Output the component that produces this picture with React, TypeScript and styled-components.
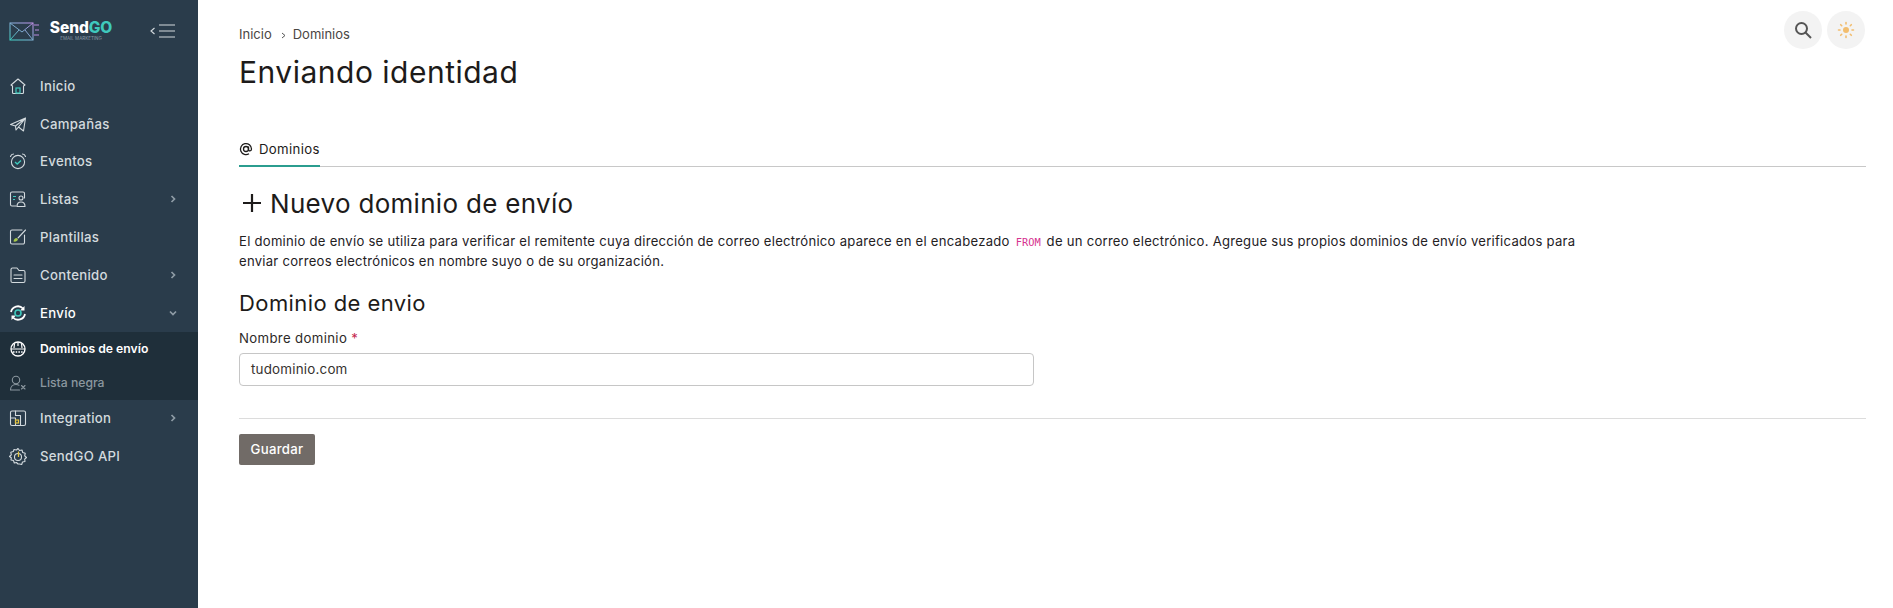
import React from 'react';
import styled, { createGlobalStyle } from 'styled-components';

const FONT = `Inter, "Open Sans", "Liberation Sans", sans-serif`;

const Global = createGlobalStyle`
  html, body { margin: 0; padding: 0; background: #fff; }
  body { font-family: ${FONT}; color: #1d1b1a; }
  * { box-sizing: border-box; }
`;

const Page = styled.div`
  display: flex;
  width: 1893px;
  height: 608px;
  overflow: hidden;
`;

const Sidebar = styled.aside`
  width: 198px;
  flex-shrink: 0;
  background: #2a3c4b;
  display: flex;
  flex-direction: column;
`;

const Brand = styled.div`
  height: 67px;
  display: flex;
  align-items: center;
  padding: 0 0 6px 9px;
`;

const BrandText = styled.div`
  display: flex;
  flex-direction: column;
  align-items: center;
  margin-left: 9px;
  width: 64px;
`;

const BrandName = styled.div`
  font-size: 15.5px;
  line-height: 16px;
  font-weight: 800;
  color: #fff;
  letter-spacing: -0.1px;
  span { color: #3fc9bd; }
`;

const BrandSub = styled.div`
  font-size: 4.5px;
  line-height: 6px;
  color: #8b9aa6;
  white-space: nowrap;
`;

const Collapse = styled.div`
  margin-left: auto;
  margin-right: 22px;
  display: flex;
`;

const Nav = styled.nav`
  display: flex;
  flex-direction: column;
`;

const NavItem = styled.div<{ $active?: boolean }>`
  height: 37.8px;
  display: flex;
  align-items: center;
  padding: 0 20px 0 9px;
  font-size: 13.2px;
  letter-spacing: 0.3px;
  font-weight: 500;
  color: ${({ $active }) => ($active ? '#ffffff' : '#d3dade')};
`;

const NavIcon = styled.span`
  width: 18px;
  height: 18px;
  margin-right: 13px;
  display: flex;
`;

const Chevron = styled.span`
  margin-left: auto;
  display: flex;
  color: #8f9ca6;
`;

const SubNav = styled.div`
  background: #1f2f3a;
  height: 68px;
  display: flex;
  flex-direction: column;
`;

const SubItem = styled.div<{ $active?: boolean }>`
  height: 34px;
  display: flex;
  align-items: center;
  padding-left: 9px;
  font-size: 12.2px;
  font-weight: ${({ $active }) => ($active ? 600 : 500)};
  color: ${({ $active }) => ($active ? '#ffffff' : '#8b979f')};
`;

const Main = styled.main`
  flex: 1;
  padding: 0 27px 0 41px;
  position: relative;
`;

const Crumbs = styled.div`
  display: flex;
  align-items: center;
  height: 18px;
  margin-top: 25px;
  font-size: 13px;
  color: #4a4643;
`;

const CrumbSep = styled.span`
  margin: 3px 6px 0 8px;
  display: flex;
`;

const Title = styled.h1`
  margin: 9px 0 0;
  font-size: 30px;
  letter-spacing: 0.5px;
  line-height: 40px;
  font-weight: 400;
  color: #1d1b1a;
`;

const ToolBar = styled.div`
  position: absolute;
  top: 11px;
  right: 28px;
  display: flex;
  gap: 5px;
`;

const RoundButton = styled.div`
  width: 38px;
  height: 38px;
  border-radius: 50%;
  background: #f3f3f3;
  display: flex;
  align-items: center;
  justify-content: center;
`;

const Tabs = styled.div`
  margin-top: 41px;
  height: 34px;
  border-bottom: 1px solid #c8c8c8;
  display: flex;
`;

const Tab = styled.div`
  display: flex;
  align-items: center;
  gap: 6px;
  height: 34px;
  padding-bottom: 1px;
  border-bottom: 2px solid #2b9d8f;
  font-size: 13.2px;
  letter-spacing: 0.35px;
  color: #1d1b1a;
`;

const NewHeading = styled.h2`
  margin: 18px 0 0;
  display: flex;
  align-items: center;
  gap: 5px;
  height: 36px;
  font-size: 26px;
  letter-spacing: 0.3px;
  font-weight: 400;
  color: #1d1b1a;
`;

const Description = styled.p`
  margin: 10px 0 0;
  width: 1345px;
  font-size: 13.1px;
  letter-spacing: 0.26px;
  line-height: 20px;
  color: #24211f;
`;

const Code = styled.code`
  font-family: "DejaVu Sans Mono", "Liberation Mono", monospace;
  font-size: 10.4px;
  line-height: 1;
  letter-spacing: 0;
  color: #d6338f;
  margin: 0 2px;
`;

const SectionTitle = styled.h3`
  margin: 17px 0 0;
  font-size: 22px;
  letter-spacing: 0.42px;
  line-height: 30px;
  font-weight: 400;
  color: #1d1b1a;
`;

const FieldLabel = styled.label`
  display: block;
  margin-top: 10px;
  font-size: 13.2px;
  letter-spacing: 0.35px;
  line-height: 20px;
  color: #2d2a28;
  span { color: #c3234a; }
`;

const TextInput = styled.div`
  margin-top: 5px;
  width: 795px;
  height: 33px;
  display: flex;
  align-items: center;
  padding: 0 0 1px 11px;
  border: 1px solid #c6c6c6;
  border-radius: 4px;
  font-size: 13.4px;
  letter-spacing: 0.2px;
  color: #36322f;
`;

const Divider = styled.hr`
  margin: 32px 0 0;
  border: 0;
  border-top: 1px solid #dcdcdc;
`;

const SaveButton = styled.button`
  margin-top: 15px;
  width: 76px;
  height: 31px;
  padding: 0 0 2px;
  border: 0;
  border-radius: 2px;
  background: #716b67;
  color: #fff;
  font-family: ${FONT};
  font-size: 13.2px;
  letter-spacing: 0.3px;
  font-weight: 500;
`;

const Line = { fill: 'none', stroke: '#d3dade', strokeWidth: 1.1, strokeLinecap: 'round', strokeLinejoin: 'round' } as const;
const TEAL = '#3fc9bd';

const Logo = () => (
  <svg width="31" height="20" viewBox="0 0 31 20" fill="none">
    <defs>
      <linearGradient id="lg" x1="0" y1="1" x2="1" y2="0">
        <stop offset="0" stopColor="#3fc9bd" />
        <stop offset="1" stopColor="#b98be0" />
      </linearGradient>
    </defs>
    <rect x="1" y="2" width="23" height="17" fill="none" stroke="url(#lg)" strokeWidth="1.1" />
    <path d="M1 2l12 9 11-9M1 19l9-10M24 19l-8-10" stroke="url(#lg)" strokeWidth="1" />
    <path d="M25 4h5M26 9h4M25 14h5" stroke="#b98be0" strokeWidth="1" />
  </svg>
);

const icons: Record<string, React.ReactNode> = {
  home: (
    <svg viewBox="0 0 18 18" width="18" height="18">
      <path {...Line} d="M2 8l7-6 7 6-1.5 1v6.5a1 1 0 0 1-1 1h-9a1 1 0 0 1-1-1V9z" />
      <rect x="7" y="11" width="4" height="5" fill="none" stroke={TEAL} strokeWidth="1.2" />
    </svg>
  ),
  send: (
    <svg viewBox="0 0 18 18" width="18" height="18">
      <path {...Line} d="M1.5 9.5L16.5 3l-2 13-5-4-2.5 3-.5-4zM6.5 11L16.500 3M9.500 12l7-9" />
    </svg>
  ),
  clock: (
    <svg viewBox="0 0 18 18" width="18" height="18">
      <circle {...Line} cx="9" cy="10" r="6.6" />
      <path {...Line} d="M1.500 4.500c.5-1.500 2-2.500 3-2.500M16.500 4.500c-.5-1.500-2-2.500-3-2.500" />
      <path fill="none" stroke={TEAL} strokeWidth="1.4" d="M6 10l2.200 2L12 8.500" />
    </svg>
  ),
  list: (
    <svg viewBox="0 0 18 18" width="18" height="18">
      <path {...Line} d="M7 16H3a1.500 1.500 0 0 1-1.500-1.500v-11A1.500 1.500 0 0 1 3 2h11a1.500 1.500 0 0 1 1.500 1.500V8" />
      <circle {...Line} cx="12" cy="8" r="2" />
      <path {...Line} d="M8 16.500c0-3 2-4.500 4-4.500s4 1.500 4 4.500z" />
      <path fill="none" stroke={TEAL} strokeWidth="1.1" d="M4 6.500h3M4 9.500h2" />
    </svg>
  ),
  template: (
    <svg viewBox="0 0 18 18" width="18" height="18">
      <path {...Line} d="M13 2H3a1.500 1.500 0 0 0-1.500 1.500v11A1.500 1.500 0 0 0 3 16h11a1.500 1.500 0 0 0 1.500-1.500V7" />
      <path {...Line} d="M16.500 2L9 10" />
      <path d="M4.500 13.500c.2-2 1.500-3.500 3-3.500l1.500 1.500c-.3 1.500-2.500 2.500-4.500 2z" fill="#a8c94a" />
    </svg>
  ),
  content: (
    <svg viewBox="0 0 18 18" width="18" height="18">
      <path {...Line} d="M2 3.500A1.500 1.500 0 0 1 3.500 2H8l2 2.500h4.500A1.500 1.500 0 0 1 16 6v9a1.500 1.500 0 0 1-1.500 1.500h-11A1.500 1.500 0 0 1 2 15zM5 9h8M5 12.500h8" />
    </svg>
  ),
  sync: (
    <svg viewBox="0 0 18 18" width="18" height="18">
      <path fill="none" stroke="#fff" strokeWidth="1.8" d="M2 8a7 7 0 0 1 12-3.500M16 10a7 7 0 0 1-12 3.500" />
      <path fill="#fff" d="M15.500 2v4.500H11zM2.500 16v-4.500H7z" />
      <circle cx="9" cy="9" r="3" fill="none" stroke={TEAL} strokeWidth="1.6" />
    </svg>
  ),
  globe: (
    <svg viewBox="0 0 18 18" width="18" height="18">
      <circle cx="9" cy="9" r="7" fill="none" stroke="#fff" strokeWidth="1.300" />
      <path fill="none" stroke="#fff" strokeWidth="1.200" d="M2 9h14M9 2v4M5.500 3.500L5 8M12.500 3.500L13 8" />
      <path fill="none" stroke="#fff" strokeWidth="1.500" strokeDasharray="1.500 1.200" d="M4 12h10" />
    </svg>
  ),
  block: (
    <svg viewBox="0 0 18 18" width="18" height="18">
      <g fill="none" stroke="#8b979f" strokeWidth="1.100" strokeLinecap="round">
        <circle cx="7" cy="6" r="3.700" />
        <path d="M1.500 16c0-3 2-5.500 5.500-5.500 1 0 2 .2 3 .7M1.500 16h9M12.500 11.500l3.500 3.500M16 11.500L12.500 15" />
      </g>
    </svg>
  ),
  integration: (
    <svg viewBox="0 0 18 18" width="18" height="18">
      <rect {...Line} x="1.500" y="2" width="15" height="14.500" rx="1.500" />
      <path {...Line} d="M6.500 2v4.500h5V16.500M1.500 9h5V16.500" />
      <rect x="6.500" y="11" width="3" height="3" fill="none" stroke="#e3c43f" strokeWidth="1.200" />
    </svg>
  ),
  api: (
    <svg viewBox="0 0 18 18" width="18" height="18">
      <path {...Line} d="M9 1.500l1.500 2 2.500-.5.700 2.500 2.500.800-.5 2.500 1.800 1.700-1.800 1.700.3 2.300-2.500.5-.8 2.500-2.200-.5L9 17l-1.500-1.500-2.200.5-.8-2.500-2.500-.5.300-2.300L.5 9.500 2.300 7.800l-.5-2.500 2.500-.8L5 2.500 7.500 3z" />
      <circle {...Line} cx="9" cy="10" r="3.500" />
      <path fill="none" stroke="#e3c43f" strokeWidth="1.300" d="M9.500 4.500V10" />
    </svg>
  ),
};

const Right = () => (
  <svg width="10" height="10" viewBox="0 0 10 10">
    <path d="M3.500 2l3 3-3 3" fill="none" stroke="currentColor" strokeWidth="1.700" />
  </svg>
);

const Down = () => (
  <svg width="10" height="10" viewBox="0 0 10 10">
    <path d="M2 3.500l3 3 3-3" fill="none" stroke="currentColor" strokeWidth="1.700" />
  </svg>
);

type Item = { label: string; icon: string; arrow?: 'right' | 'down'; active?: boolean };

const topItems: Item[] = [
  { label: 'Inicio', icon: 'home' },
  { label: 'Campañas', icon: 'send' },
  { label: 'Eventos', icon: 'clock' },
  { label: 'Listas', icon: 'list', arrow: 'right' },
  { label: 'Plantillas', icon: 'template' },
  { label: 'Contenido', icon: 'content', arrow: 'right' },
  { label: 'Envío', icon: 'sync', arrow: 'down', active: true },
];

const bottomItems: Item[] = [
  { label: 'Integration', icon: 'integration', arrow: 'right' },
  { label: 'SendGO API', icon: 'api' },
];

const Row = ({ item }: { item: Item }) => (
  <NavItem $active={item.active}>
    <NavIcon>{icons[item.icon]}</NavIcon>
    {item.label}
    {item.arrow && <Chevron>{item.arrow === 'right' ? <Right /> : <Down />}</Chevron>}
  </NavItem>
);

export default function App() {
  return (
    <Page>
      <Global />
      <Sidebar>
        <Brand>
          <Logo />
          <BrandText>
            <BrandName>
              Send<span>GO</span>
            </BrandName>
            <BrandSub>EMAIL MARKETING</BrandSub>
          </BrandText>
          <Collapse>
            <svg width="26" height="16" viewBox="0 0 26 16" fill="none" stroke="#d3dade" strokeWidth="1.100">
              <path d="M4.500 5L1 8l3.500 3M9 2h16M9 8h16M9 14h16" />
            </svg>
          </Collapse>
        </Brand>
        <Nav>
          {topItems.map((item) => (
            <Row key={item.label} item={item} />
          ))}
          <SubNav>
            <SubItem $active>
              <NavIcon>{icons.globe}</NavIcon>
              Dominios de envío
            </SubItem>
            <SubItem>
              <NavIcon>{icons.block}</NavIcon>
              Lista negra
            </SubItem>
          </SubNav>
          {bottomItems.map((item) => (
            <Row key={item.label} item={item} />
          ))}
        </Nav>
      </Sidebar>
      <Main>
        <ToolBar>
          <RoundButton>
            <svg width="22" height="22" viewBox="0 0 22 22" fill="none" stroke="#555" strokeWidth="2">
              <circle cx="9.500" cy="9.500" r="5.500" />
              <path d="M13.500 13.500l5.500 5.500" />
            </svg>
          </RoundButton>
          <RoundButton>
            <svg width="18" height="18" viewBox="0 0 18 18" fill="none" stroke="#f2bd6e" strokeWidth="1.600" strokeLinecap="round">
              <circle cx="9" cy="9" r="3" fill="#f2bd6e" stroke="none" />
              <path d="M9 1.500v1.500M9 15v1.500M1.500 9H3M15 9h1.500M3.700 3.700l1 1M13.300 13.300l1 1M3.700 14.300l1-1M13.300 4.700l1-1" />
            </svg>
          </RoundButton>
        </ToolBar>
        <Crumbs>
          Inicio
          <CrumbSep>
            <svg width="7" height="7" viewBox="0 0 7 7">
              <path d="M2 1l3 2.500L2 6" fill="none" stroke="#555" strokeWidth="1" />
            </svg>
          </CrumbSep>
          Dominios
        </Crumbs>
        <Title>Enviando identidad</Title>
        <Tabs>
          <Tab>
            <svg width="14" height="14" viewBox="0 0 14 14" fill="none" stroke="#1d1b1a" strokeWidth="1.300">
              <circle cx="7" cy="7" r="2.500" />
              <path d="M9.500 4.500v3.200c0 1.700 3 1.700 3-.7a5.500 5.500 0 1 0-2.500 4.700" />
            </svg>
            Dominios
          </Tab>
        </Tabs>
        <NewHeading>
          <svg width="26" height="26" viewBox="0 0 26 26" fill="none" stroke="#1d1b1a" strokeWidth="2.200">
            <path d="M13 4v18M4 13h18" />
          </svg>
          Nuevo dominio de envío
        </NewHeading>
        <Description>
          El dominio de envío se utiliza para verificar el remitente cuya dirección de correo electrónico aparece en el encabezado <Code>FROM</Code> de un correo electrónico. Agregue sus propios dominios de envío verificados para enviar correos electrónicos en nombre suyo o de su organización.
        </Description>
        <SectionTitle>Dominio de envio</SectionTitle>
        <FieldLabel>
          Nombre dominio <span>*</span>
        </FieldLabel>
        <TextInput>tudominio.com</TextInput>
        <Divider />
        <SaveButton>Guardar</SaveButton>
      </Main>
    </Page>
  );
}
